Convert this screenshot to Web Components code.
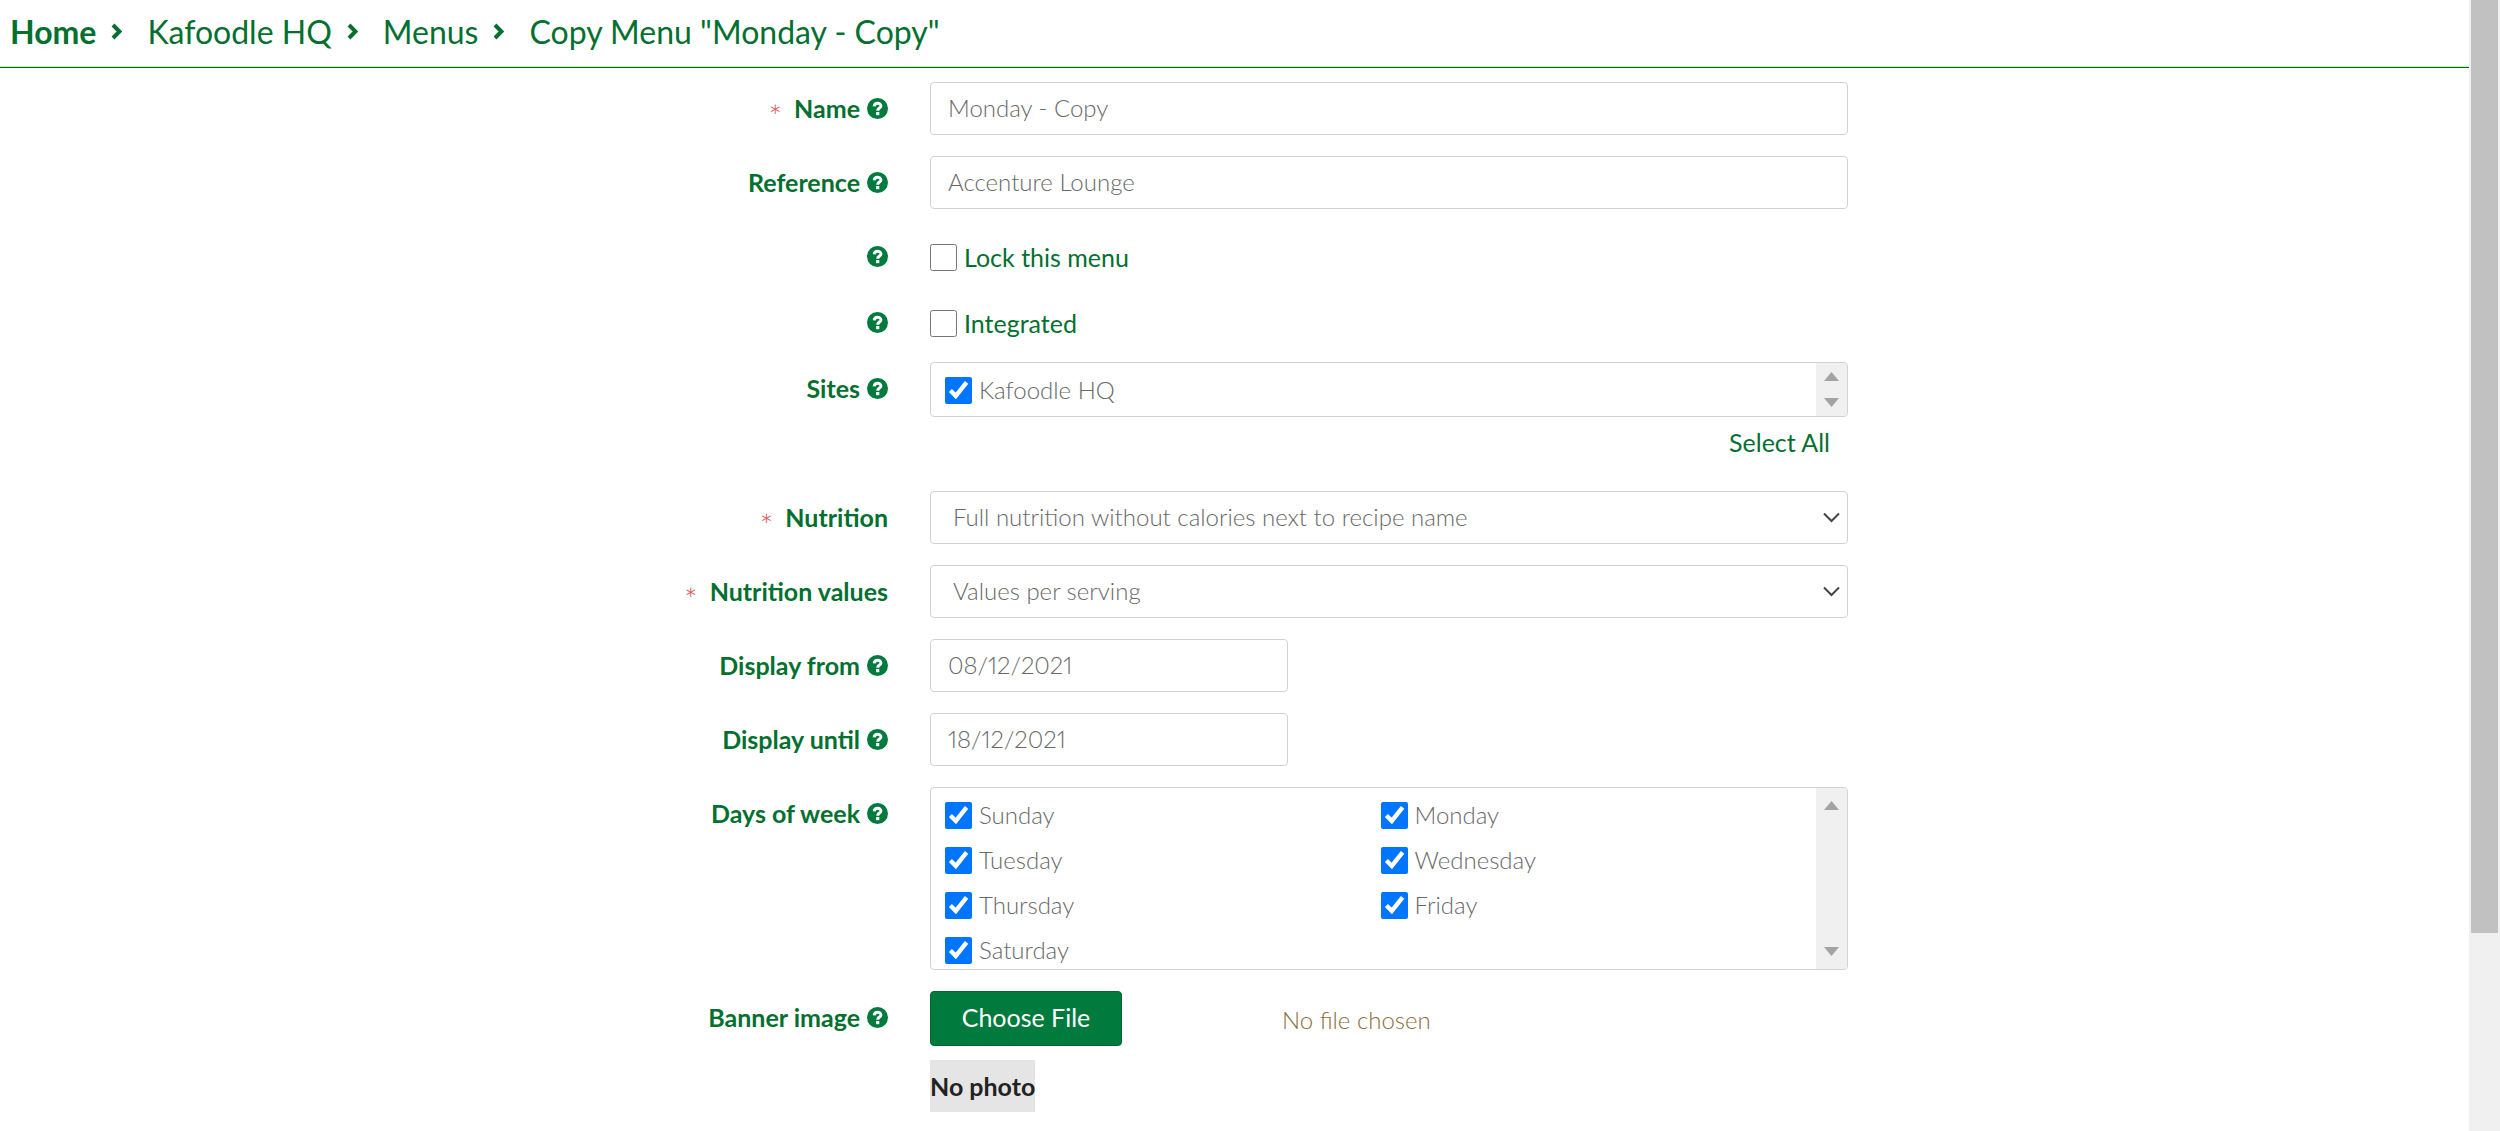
<!DOCTYPE html>
<html lang="en">
<head>
<meta charset="utf-8">
<meta name="viewport" content="width=device-width, initial-scale=1">
<title>Copy Menu</title>
<style>
  html, body { margin: 0; }
  body {
    --green: #007a3d;
    --green-text: #04702f;
    --line: #d2d2d2;
    --text: #686868;
    --strong-size: 25px;
    background: #fff;
    color: var(--text);
    font: 300 24px/32px Lato, "Liberation Sans", sans-serif;
    font-variant-numeric: proportional-nums;
  }
</style>
</head>
<body>
<app-frame>
  <crumb-bar>
    <a href="#home">Home</a>
    <a href="#hq">Kafoodle HQ</a>
    <a href="#menus">Menus</a>
    <a href="#copy" aria-current="page">Copy Menu "Monday - Copy"</a>
  </crumb-bar>
  <menu-form></menu-form>
</app-frame>

<script>
const define = (name, html, setup) => customElements.define(name, class extends HTMLElement {
  connectedCallback() {
    if (this.shadowRoot) return;
    const root = this.attachShadow({ mode: 'open' });
    root.innerHTML = typeof html === 'function' ? html(this) : html;
    if (setup) setup(this, root);
  }
});

// Page shell: content column with the scroll track at the right.
define('app-frame', `
<style>
  :host { display: grid; grid-template-columns: minmax(0, 1fr) 31px; height: 100vh; overflow: hidden; }
  .page { overflow: hidden; }
  .track { background: #f0f0f0; padding: 0 2px; }
  .thumb { height: 82.5%; background: #c1c1c1; }
</style>
<div class="page"><slot></slot></div>
<div class="track" aria-hidden="true"><div class="thumb"></div></div>`);

define('crumb-bar', el => `
<style>
  :host { display: block; border-bottom: 1px solid #006b2e; box-shadow: inset 0 -1px #c4f59a; padding: 12px 10px 15px; }
  nav { display: flex; align-items: center; font-size: 32px; line-height: 40px; font-weight: 400; }
  a { color: var(--green-text); text-decoration: none; }
  a:first-child { font-weight: 700; }
  svg { width: 11px; height: 18px; margin: 0 25px 0 15px; fill: none; stroke: var(--green-text); stroke-width: 4; }
</style>
<nav aria-label="Breadcrumb">${[...el.querySelectorAll('a')].map(a => a.outerHTML)
  .join('<svg viewBox="0 0 11 18" aria-hidden="true"><path d="M2 2 L8.5 8.5 L2 15"/></svg>')}</nav>`);

define('help-mark', `
<style>
  :host { display: block; width: 21px; height: 21px; margin-left: 7px; }
  svg { display: block; width: 21px; height: 21px; }
</style>
<svg viewBox="0 0 21 21" role="img" aria-label="Help"><circle cx="10.5" cy="10.5" r="10.5" fill="#007a3d"/>
<path d="M7.2 8.4 C7.4 4.2 13.9 4.4 13.9 7.9 C13.9 10.2 10.7 10 10.7 12.8" fill="none" stroke="#fff" stroke-width="3"/>
<rect x="9.1" y="14" width="3.2" height="3.2" fill="#fff"/></svg>`);

// One form row: label column, field column.
define('form-row', el => `
<style>
  :host { display: grid; grid-template-columns: minmax(0, 888fr) minmax(0, 918fr) minmax(0, 579fr); column-gap: 42px; }
  .label { display: flex; justify-content: flex-end; align-items: center; align-self: start; padding: 10px 0 3px; min-height: 32px;
    color: var(--green-text); font-weight: 700; font-size: var(--strong-size); }
  .star { color: #d9534f; font-weight: 300; font-size: 32px; padding-top: 8px; margin: 0 12px -8px 0; }
</style>
<div class="label">${el.hasAttribute('required') ? '<span class="star">*</span>' : ''}<slot name="label"></slot>${
  el.hasAttribute('help') ? '<help-mark></help-mark>' : ''}</div>
<div class="field"><slot></slot></div>`);

define('scroll-track', `
<style>
  :host { display: flex; flex-direction: column; justify-content: space-between; align-items: center; width: 31px; background: #f0f0f0; padding: var(--arrow-inset) 0; box-sizing: border-box; }
  svg { width: 15px; height: 9px; fill: #a3a3a3; }
</style>
<svg viewBox="0 0 15 9"><path d="M0 9 L7.5 0 L15 9Z"/></svg>
<svg viewBox="0 0 15 9"><path d="M0 0 L7.5 9 L15 0Z"/></svg>`);

define('check-item', el => `
<style>
  :host { display: block; }
  label { display: flex; align-items: center; gap: 7px; height: 28px; white-space: nowrap; }
  input { width: 27px; height: 27px; margin: 0; flex: none; accent-color: #0075ff; }
</style>
<label><input type="checkbox"${el.hasAttribute('checked') ? ' checked' : ''}><span><slot></slot></span></label>`);

define('check-list', `
<style>
  :host { display: grid; grid-template-columns: minmax(0, 1fr) 31px; border: 1px solid var(--line); border-radius: 4px; overflow: hidden; box-sizing: border-box; }
  .items { display: grid; grid-template-columns: 1fr 1fr; align-content: start; row-gap: 17px; padding: 13px 0 0 14px; overflow: hidden; height: var(--view); box-sizing: border-box; }
</style>
<div class="items"><slot></slot></div><scroll-track></scroll-track>`);

define('menu-form', `
<style>
  :host { display: block; padding-top: 14px; }
  form { display: flex; flex-direction: column; gap: 21px; }
  input, select, button { font: inherit; color: inherit; font-variant-numeric: inherit; box-sizing: border-box; margin: 0; }
  input, select { display: block; width: 100%; height: 53px; background: #fff; border: 1px solid var(--line); border-radius: 4px; padding: 0 17px 2px; }
  .date { width: 39%; }
  select { appearance: none; padding: 0 48px 2px 22px; grid-area: 1 / 1; }
  .select { display: grid; align-items: center; }
  .select svg { grid-area: 1 / 1; justify-self: end; width: 17px; height: 11px; margin-right: 8px; fill: none; stroke: #444; stroke-width: 2; pointer-events: none; }
  .tick { padding-top: 13px; min-height: 32px; }
  .tick check-item { color: var(--green-text); font-weight: 400; font-size: var(--strong-size); }
  .short { --view: 53px; --arrow-inset: 9px; }
  .tall { --view: 181px; --arrow-inset: 13px; }
  .all { display: flex; justify-content: flex-end; padding: 9px 18px 12px 0; }
  a { color: var(--green-text); font-weight: 400; font-size: var(--strong-size); text-decoration: none; }
  .file { display: flex; align-items: center; }
  button { background: var(--green); color: #fff; border: 1px solid #00652f; border-radius: 4px; height: 55px; width: 192px; padding: 0 0 3px; font-weight: 400; font-size: var(--strong-size); }
  output { color: #8a6d3b; margin-left: 160px; padding-top: 3px; }
  .photo { display: flex; margin-top: 14px; }
  .photo span { background: #e5e5e5; color: #222; font-weight: 700; font-size: var(--strong-size); line-height: 52px; }
</style>
<form>
  <form-row required help><label slot="label" for="name">Name</label><input id="name" type="text" value="Monday - Copy"></form-row>
  <form-row help><label slot="label" for="ref">Reference</label><input id="ref" type="text" value="Accenture Lounge"></form-row>
  <form-row help><div class="tick"><check-item>Lock this menu</check-item></div></form-row>
  <form-row help><div class="tick"><check-item>Integrated</check-item></div></form-row>
  <form-row help><span slot="label">Sites</span>
    <check-list class="short" role="group" aria-label="Sites"><check-item checked>Kafoodle HQ</check-item></check-list>
    <div class="all"><a href="#all">Select All</a></div>
  </form-row>
  <form-row required><label slot="label" for="nut">Nutrition</label>
    <div class="select"><select id="nut"><option>Full nutrition without calories next to recipe name</option></select>
    <svg viewBox="0 0 17 11"><path d="M1 1.5 L8.5 9 L16 1.5"/></svg></div></form-row>
  <form-row required><label slot="label" for="val">Nutrition values</label>
    <div class="select"><select id="val"><option>Values per serving</option></select>
    <svg viewBox="0 0 17 11"><path d="M1 1.5 L8.5 9 L16 1.5"/></svg></div></form-row>
  <form-row help><label slot="label" for="from">Display from</label><input class="date" id="from" type="text" value="08/12/2021"></form-row>
  <form-row help><label slot="label" for="until">Display until</label><input class="date" id="until" type="text" value="18/12/2021"></form-row>
  <form-row help><span slot="label">Days of week</span>
    <check-list class="tall" role="group" aria-label="Days of week">
      <check-item checked>Sunday</check-item><check-item checked>Monday</check-item>
      <check-item checked>Tuesday</check-item><check-item checked>Wednesday</check-item>
      <check-item checked>Thursday</check-item><check-item checked>Friday</check-item>
      <check-item checked>Saturday</check-item>
    </check-list></form-row>
  <form-row help><label slot="label" for="banner">Banner image</label>
    <div class="file"><button type="button" id="choose">Choose File</button><input id="banner" type="file" hidden><output for="banner">No file chosen</output></div>
    <div class="photo"><span>No photo</span></div></form-row>
</form>`, (el, root) => {
  const file = root.getElementById('banner');
  file.style.display = 'none';
  root.getElementById('choose').addEventListener('click', () => file.click());
  file.addEventListener('change', () => {
    root.querySelector('output').textContent = file.files.length ? file.files[0].name : 'No file chosen';
  });
});
</script>
</body>
</html>
